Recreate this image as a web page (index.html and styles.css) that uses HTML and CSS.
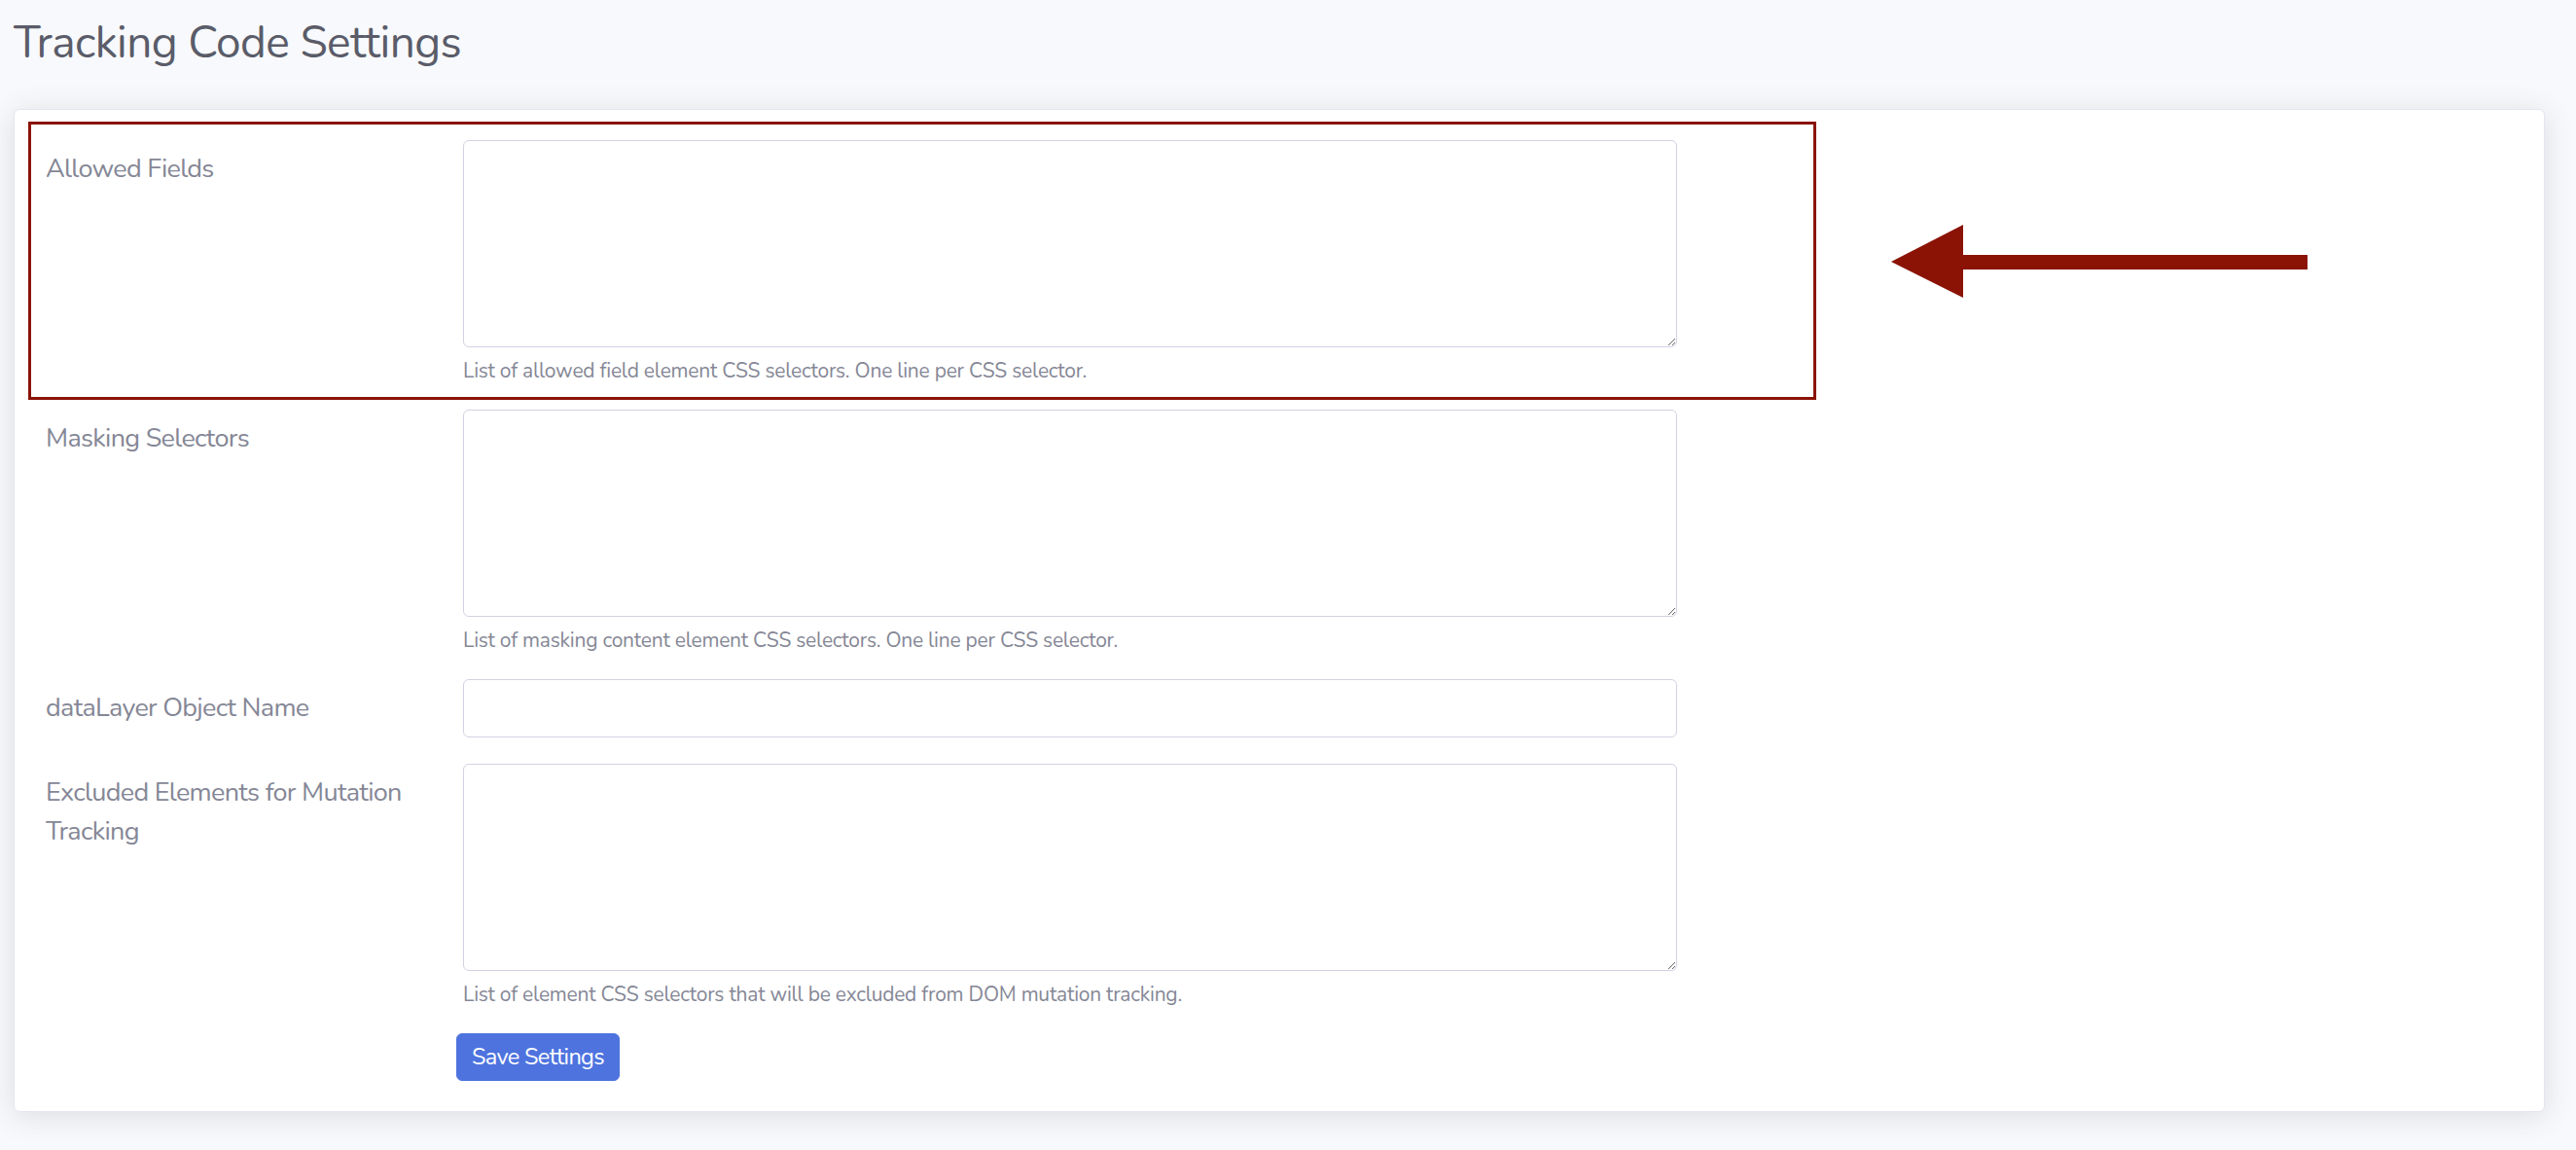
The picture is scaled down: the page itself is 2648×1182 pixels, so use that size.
FILE: index.html
```html
<!DOCTYPE html>
<html lang="en">
<head>
    <meta charset="UTF-8">
    <title>Tracking Code Settings</title>
    <link rel="stylesheet" href="styles.css">
</head>
<body>
    <div class="wrap">
        <h1 class="page-title">Tracking Code Settings</h1>
        <div class="card">
            <form class="settings-form">
                <div class="form-row">
                    <label class="form-label" for="allowed_fields">Allowed Fields</label>
                    <div class="form-col">
                        <textarea class="field field-area" id="allowed_fields"></textarea>
                        <small class="help">List of allowed field element CSS selectors. One line per CSS selector.</small>
                    </div>
                </div>
                <div class="form-row">
                    <label class="form-label" for="masking_selectors">Masking Selectors</label>
                    <div class="form-col">
                        <textarea class="field field-area" id="masking_selectors"></textarea>
                        <small class="help">List of masking content element CSS selectors. One line per CSS selector.</small>
                    </div>
                </div>
                <div class="form-row">
                    <label class="form-label" for="datalayer_name">dataLayer Object Name</label>
                    <div class="form-col">
                        <input class="field field-input" type="text" id="datalayer_name">
                    </div>
                </div>
                <div class="form-row">
                    <label class="form-label" for="excluded_elements">Excluded Elements for Mutation Tracking</label>
                    <div class="form-col">
                        <textarea class="field field-area" id="excluded_elements"></textarea>
                        <small class="help">List of element CSS selectors that will be excluded from DOM mutation tracking.</small>
                    </div>
                </div>
                <div class="form-row form-actions">
                    <div></div>
                    <div class="form-col">
                        <button type="button" class="btn-save">Save Settings</button>
                    </div>
                </div>
            </form>
        </div>
        <!-- 标注框和箭头 -->
        <div class="callout"></div>
        <svg class="callout-arrow" width="430" height="76" viewBox="0 0 430 76">
            <polygon points="0,38 74,0 74,75" fill="#8a1306"/>
            <rect x="73" y="31" width="355" height="15" fill="#8a1306"/>
        </svg>
    </div>
</body>
</html>
```

FILE: styles.css
```css
html{
    background-color: #f8f9fc;
}
*{
    margin: 0;
    padding: 0;
    box-sizing: border-box;
}
body{
    font-family: "Nunito", Lato, "Open Sans", sans-serif;
    color: #858796;
}
.wrap{
    position: relative;
    min-height: 1182px;
    padding: 16px 32px 0 14px;
}
.page-title{
    font-size: 46px;
    line-height: 1.2;
    font-weight: 400;
    letter-spacing: -0.6px;
    color: #5a5c69;
    margin-bottom: 41px;
}
.card{
    background-color: #fff;
    border: 1px solid #e3e6f0;
    border-radius: 6px;
    box-shadow: 0 4px 30px 0 rgba(58, 59, 69, 0.15);
    padding: 31px 32px 31px 32px;
}
.form-row{
    display: grid;
    grid-template-columns: 429px 1248px;
    margin-bottom: 26.5px;
}
.form-actions{
    margin-bottom: 0;
}
.form-label{
    padding-top: 10px;
    padding-right: 24px;
    font-size: 27px;
    line-height: 1.5;
    letter-spacing: -0.7px;
    color: #858796;
}
.field{
    display: block;
    width: 100%;
    border: 1px solid #d1d3e2;
    border-radius: 6px;
    background-color: #fff;
    font-family: inherit;
    font-size: 27px;
    color: #6e707e;
    padding: 10px 20px;
    outline: none;
}
.field-area{
    height: 213px;
    resize: vertical;
}
.field-input{
    height: 60px;
}
.help{
    display: block;
    margin-top: 9px;
    margin-bottom: -3px;
    font-size: 21px;
    line-height: 1.5;
    letter-spacing: -0.24px;
    color: #858796;
}
.btn-save{
    margin-left: -7px;
    font-family: inherit;
    font-size: 23.6px;
    line-height: 1.5;
    letter-spacing: -0.7px;
    padding: 6px 15px;
    color: #fff;
    background-color: #4e73df;
    border: 1px solid #4e73df;
    border-radius: 6px;
    cursor: pointer;
}
/* 标注 */
.callout{
    position: absolute;
    left: 29px;
    top: 125px;
    width: 1838px;
    height: 286px;
    border: 3.5px solid #8a1306;
    pointer-events: none;
}
.callout-arrow{
    position: absolute;
    left: 1944px;
    top: 231px;
}
```
